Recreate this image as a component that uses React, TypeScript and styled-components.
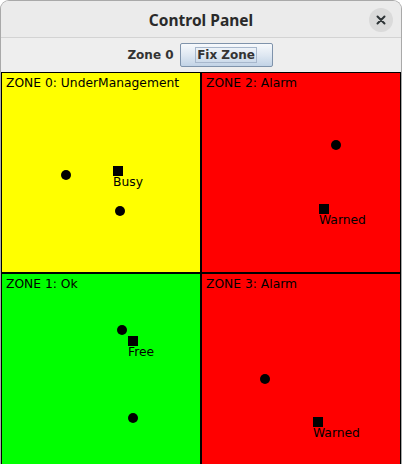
import React from "react";
import styled, { createGlobalStyle } from "styled-components";

const Global = createGlobalStyle`
  html, body { margin: 0; padding: 0; background: #ffffff; }
  body { width: 402px; height: 464px; overflow: hidden; }
`;

const Window = styled.div`
  width: 402px;
  height: 464px;
  box-sizing: border-box;
  border: 1px solid #a9a9a9;
  border-bottom: none;
  border-radius: 9px 9px 0 0;
  overflow: hidden;
  background: #eeeeee;
  display: flex;
  flex-direction: column;
`;

const TitleBar = styled.div`
  height: 36px;
  flex: none;
  background: #ebebeb;
  border-bottom: 1px solid #d3d3d3;
  display: flex;
  align-items: center;
  justify-content: center;
  position: relative;
`;

const Title = styled.div`
  font-family: "Noto Sans", "DejaVu Sans", sans-serif;
  font-weight: 700;
  font-size: 15.5px;
  color: #2a2a2a;
  margin-top: 1px;
`;

const CloseButton = styled.div`
  position: absolute;
  right: 8px;
  top: 7px;
  width: 24px;
  height: 24px;
  border-radius: 50%;
  background: #dadada;
  display: flex;
  align-items: center;
  justify-content: center;
`;

const Toolbar = styled.div`
  height: 33px;
  flex: none;
  background: #eeeeee;
  display: flex;
  align-items: center;
  justify-content: center;
  gap: 6px;
  padding-right: 2px;
`;

const ToolLabel = styled.span`
  font-family: "DejaVu Sans", sans-serif;
  font-weight: 700;
  font-size: 12px;
  color: #333333;
`;

const FixButton = styled.button`
  width: 93px;
  height: 24px;
  padding: 0;
  box-sizing: border-box;
  border: 1px solid #7f93ab;
  border-radius: 2px;
  background: linear-gradient(#f7f9fc, #dfe8f2 50%, #c2d3e6);
  display: flex;
  align-items: center;
  justify-content: center;
  margin-top: 1px;
`;

const FocusRing = styled.span`
  font-family: "DejaVu Sans", sans-serif;
  font-weight: 700;
  font-size: 12px;
  color: #333333;
  border: 1px solid #a7b7cc;
  padding: 0 1px;
  line-height: 14px;
`;

const Grid = styled.div`
  margin-top: 1px;
  display: grid;
  grid-template-columns: 200px 200px;
  grid-template-rows: 201px 201px;
`;

const Zone = styled.div<{ $bg: string }>`
  position: relative;
  box-sizing: border-box;
  border: 1px solid #000000;
  background: ${(p) => p.$bg};
  font-family: "DejaVu Sans", sans-serif;
  font-size: 12.3px;
  color: #000000;
`;

const ZoneTitle = styled.div`
  position: absolute;
  left: 4px;
  top: 3px;
  line-height: 15px;
  white-space: nowrap;
`;

const Dot = styled.div`
  position: absolute;
  width: 10px;
  height: 10px;
  margin: -5px 0 0 -5px;
  border-radius: 50%;
  background: #000000;
`;

const Agent = styled.div`
  position: absolute;
  display: flex;
  flex-direction: column;
  align-items: flex-start;
`;

const Square = styled.div`
  width: 10px;
  height: 10px;
  background: #000000;
`;

const AgentLabel = styled.span`
  line-height: 13px;
  margin-top: 0;
  white-space: nowrap;
`;

type Item = { x: number; y: number };
type ZoneData = {
  title: string;
  bg: string;
  dots: Item[];
  agent: Item & { label: string };
};

const zones: ZoneData[] = [
  {
    title: "ZONE 0: UnderManagement",
    bg: "#ffff00",
    dots: [{ x: 64, y: 102 }, { x: 118, y: 138 }],
    agent: { x: 111, y: 93, label: "Busy" },
  },
  {
    title: "ZONE 2: Alarm",
    bg: "#ff0000",
    dots: [{ x: 134, y: 72 }],
    agent: { x: 117, y: 131, label: "Warned" },
  },
  {
    title: "ZONE 1: Ok",
    bg: "#00ff00",
    dots: [{ x: 120, y: 56 }, { x: 131, y: 144 }],
    agent: { x: 126, y: 62, label: "Free" },
  },
  {
    title: "ZONE 3: Alarm",
    bg: "#ff0000",
    dots: [{ x: 63, y: 105 }],
    agent: { x: 111, y: 143, label: "Warned" },
  },
];

export default function App() {
  return (
    <>
      <Global />
      <Window>
        <TitleBar>
          <Title>Control Panel</Title>
          <CloseButton>
            <svg width="10" height="10" viewBox="0 0 10 10">
              <path d="M1.5 1.5 L8.5 8.5 M8.5 1.5 L1.5 8.5" stroke="#2e3436" strokeWidth="2" strokeLinecap="round" />
            </svg>
          </CloseButton>
        </TitleBar>
        <Toolbar>
          <ToolLabel>Zone 0</ToolLabel>
          <FixButton>
            <FocusRing>Fix Zone</FocusRing>
          </FixButton>
        </Toolbar>
        <Grid>
          {zones.map((z) => (
            <Zone key={z.title} $bg={z.bg}>
              <ZoneTitle>{z.title}</ZoneTitle>
              {z.dots.map((d, i) => (
                <Dot key={i} style={{ left: d.x, top: d.y }} />
              ))}
              <Agent style={{ left: z.agent.x, top: z.agent.y }}>
                <Square />
                <AgentLabel>{z.agent.label}</AgentLabel>
              </Agent>
            </Zone>
          ))}
        </Grid>
      </Window>
    </>
  );
}
